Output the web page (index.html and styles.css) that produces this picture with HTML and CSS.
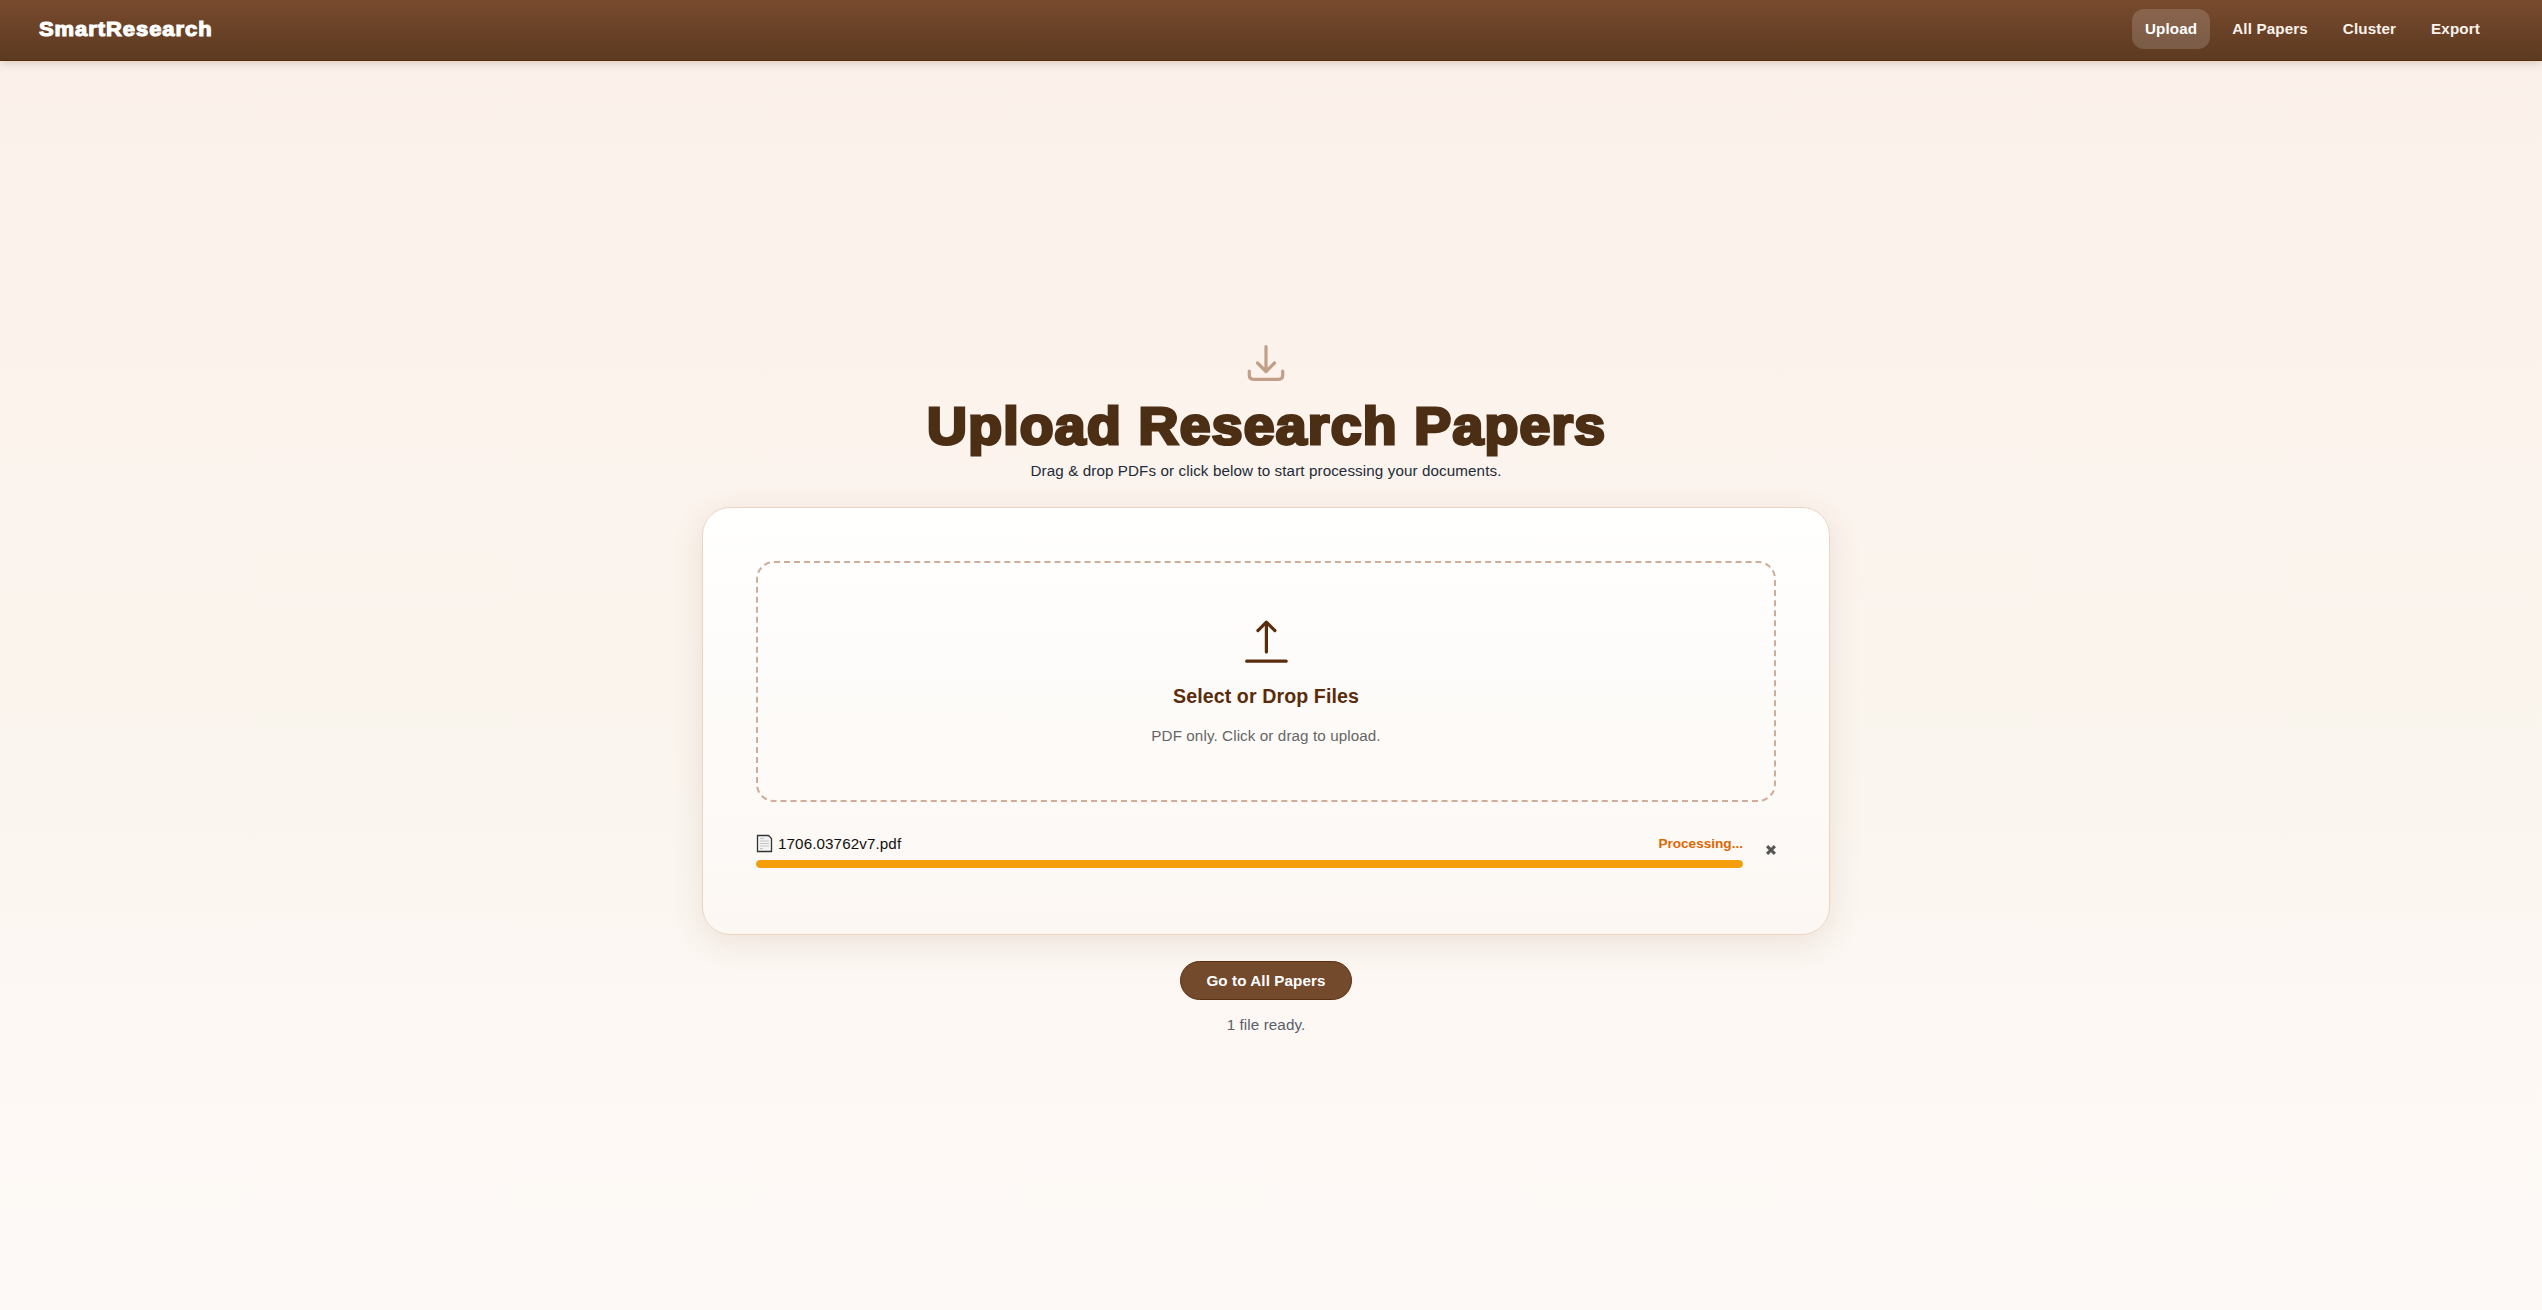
FILE: index.html
```html
<!DOCTYPE html>
<html lang="en">
<head>
<meta charset="utf-8">
<title>SmartResearch</title>
<link rel="stylesheet" href="styles.css">
</head>
<body>
<header class="navbar">
  <div class="brand">SmartResearch</div>
  <nav class="links">
    <a class="link active">Upload</a>
    <a class="link">All Papers</a>
    <a class="link">Cluster</a>
    <a class="link">Export</a>
  </nav>
</header>
<main class="page">
  <svg class="hero-icon" width="38" height="38" viewBox="0 0 38 38" fill="none" stroke="currentColor" stroke-width="3.2" stroke-linecap="round" stroke-linejoin="round">
    <path d="M19 3.500V28.500M10.500 20L19 28.500L27.500 20M2.300 28V32.500Q2.300 36.300 6.500 36.300H31.500Q35.700 36.300 35.700 32.500V28"/>
  </svg>
  <h1 class="title">Upload Research Papers</h1>
  <p class="subtitle">Drag &amp; drop PDFs or click below to start processing your documents.</p>
  <section class="card">
    <div class="dropzone">
      <svg class="drop-icon" width="44" height="44" viewBox="0 0 44 44" fill="none" stroke="currentColor" stroke-width="3.2" stroke-linecap="round" stroke-linejoin="round">
        <path d="M22.400 33V3M13.900 11.600L22.400 3.200L30.900 11.600M2.700 42.200H42.200"/>
      </svg>
      <h2 class="drop-title">Select or Drop Files</h2>
      <p class="drop-hint">PDF only. Click or drag to upload.</p>
    </div>
    <div class="file">
      <div class="file-main">
        <div class="file-head">
          <svg class="doc" width="17" height="19" viewBox="0 0 17 19" fill="none">
            <path d="M1.500 1.500H12.500L15.500 4.500V17.500H1.500Z" fill="#f4f4f4" stroke="#333" stroke-width="1.300"/>
            <path d="M4 4.500H8M4 7H13M4 9.500H13M4 12H13M4 14.500H7" stroke="#c4c4c4"/>
          </svg>
          <span class="file-name">1706.03762v7.pdf</span>
          <span class="status">Processing...</span>
        </div>
        <div class="track"><div class="fill" style="width:100%"></div></div>
      </div>
      <svg class="remove" width="10" height="10" viewBox="0 0 10 10" stroke="currentColor" stroke-width="3"><path d="M1.100 1.100L8.900 8.900M8.900 1.100L1.100 8.900"/></svg>
    </div>
  </section>
  <button class="go">Go to All Papers</button>
  <p class="ready">1 file ready.</p>
</main>
</body>
</html>
```
FILE: styles.css
```css
* { box-sizing: border-box; margin: 0; padding: 0; }
body {
  height: 1310px;
  font-family: "Liberation Sans", Arial, sans-serif;
  letter-spacing: .1px;
  background: linear-gradient(180deg, #faf0e9 0%, #fcf3ed 30%, #faf5ee 60%, #fdf8f4 80%, #fdf9f6 100%);
}
.navbar {
  height: 61px;
  display: flex;
  align-items: flex-start;
  justify-content: space-between;
  padding: 9px 49px 0 39px;
  background: linear-gradient(180deg, #784a2e, #5c3a20);
  border-bottom: 1px solid #5c2a0c;
  box-shadow: 0 2px 8px rgba(75, 45, 20, .2);
}
.brand {
  font: 700 20px/41px "Liberation Sans", Arial, sans-serif;
  letter-spacing: .85px;
  -webkit-text-stroke: 1.1px #fff;
  transform: scaleX(1.1);
  transform-origin: left;
  color: #fff;
}
.links { display: flex; gap: 9px; }
.link {
  height: 40px;
  padding: 0 13px;
  border-radius: 12px;
  font-size: 15.2px;
  font-weight: 700;
  letter-spacing: .13px;
  line-height: 39px;
  color: #fdf3ec;
}
.active { background: rgba(255, 255, 255, .16); color: #fff; }
.page {
  display: flex;
  flex-direction: column;
  align-items: center;
  padding: 282px 10px 0 0;
}
.hero-icon { color: #c19f88; }
.title {
  margin-top: 14px;
  font: 700 51px/64px "Liberation Sans", Arial, sans-serif;
  letter-spacing: 1.2px;
  -webkit-text-stroke: 3px #4b2e14;
  paint-order: stroke fill;
  transform: scaleX(1.083);
  margin-left: 2px;
  color: #4b2e14;
  white-space: nowrap;
}
.subtitle {
  margin-top: 2px;
  font-size: 15.2px;
  line-height: 20px;
  color: #222b38;
}
.card {
  width: 1128px;
  height: 428px;
  margin-top: 26px;
  padding: 53px;
  border: 1px solid #e9d5c2;
  border-radius: 28px;
  background: linear-gradient(180deg, #fffffe, #fcf7f3);
  box-shadow: 0 8px 32px rgba(120, 74, 46, .12);
}
.dropzone {
  height: 241px;
  display: flex;
  flex-direction: column;
  align-items: center;
  padding-top: 56px;
  border: 2px dashed #ceae98;
  border-radius: 18px;
}
.drop-icon { color: #5a2c0c; }
.drop-title {
  margin-top: 21px;
  font-size: 19.6px;
  line-height: 24px;
  color: #5a2c0c;
}
.drop-hint {
  margin-top: 18px;
  font-size: 15.2px;
  line-height: 20px;
  color: #666;
}
.file { display: flex; gap: 23px; padding-top: 31px; }
.file-main { flex: 1; }
.file-head { display: flex; align-items: center; height: 20px; }
.file-name { margin-left: 5px; font-size: 15.2px; color: #111; }
.status {
  margin-left: auto;
  font-size: 13.6px;
  font-weight: 700;
  letter-spacing: 0;
  color: #dc6803;
}
.track {
  height: 8px;
  margin-top: 7px;
  overflow: hidden;
  border-radius: 4px;
  background: #eee;
}
.fill { height: 100%; background: #f59e0b; border-radius: 4px; }
.remove { margin-top: 12px; color: #555; }
.go {
  width: 172px;
  height: 39px;
  margin-top: 26px;
  border: 1px solid #5c2e10;
  border-radius: 20px;
  background: #744a2c;
  font: 700 15.2px/36px "Liberation Sans", Arial, sans-serif;
  letter-spacing: .1px;
  color: #fff;
}
.ready {
  margin-top: 15px;
  font-size: 15.2px;
  line-height: 20px;
  color: #59606b;
}
```
